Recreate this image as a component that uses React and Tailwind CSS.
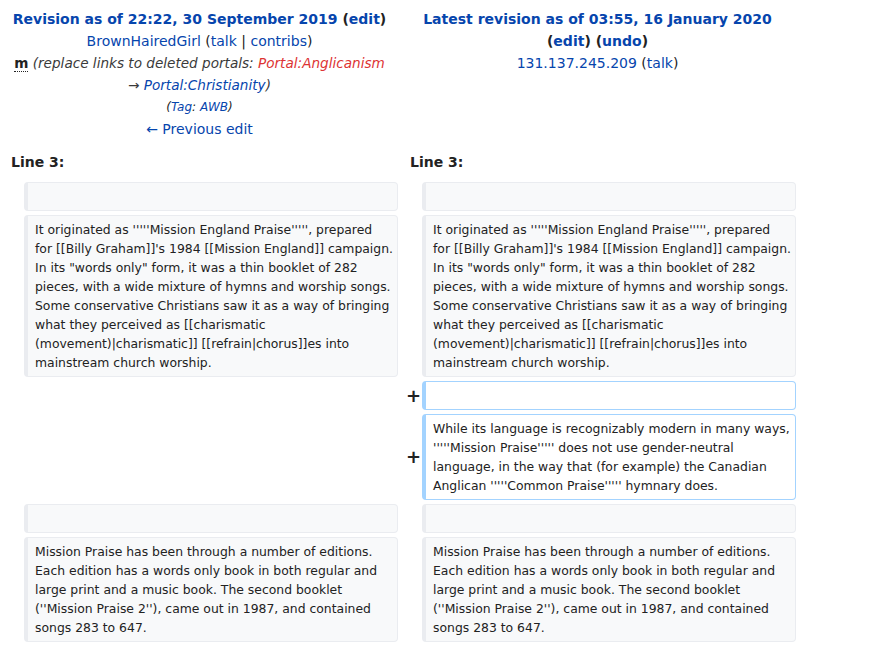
const para1 = `It originated as '''''Mission England Praise''''', prepared for [[Billy Graham]]'s 1984 [[Mission England]] campaign. In its "words only" form, it was a thin booklet of 282 pieces, with a wide mixture of hymns and worship songs. Some conservative Christians saw it as a way of bringing what they perceived as [[charismatic (movement)|charismatic]] [[refrain|chorus]]es into mainstream church worship.`

const added = `While its language is recognizably modern in many ways, '''''Mission Praise''''' does not use gender-neutral language, in the way that (for example) the Canadian Anglican '''''Common Praise''''' hymnary does.`

const para2 = `Mission Praise has been through a number of editions. Each edition has a words only book in both regular and large print and a music book. The second booklet (''Mission Praise 2''), came out in 1987, and contained songs 283 to 647.`

function Context({ text }) {
  return (
    <div className="bg-[#f8f9fa] border border-l-4 border-[#eaecf0] rounded-[4px] pl-[7px] pr-[4px] py-[4px] min-h-[29px] whitespace-pre-wrap text-[12.4px] leading-[19px] text-[#222]">
      {text}
    </div>
  )
}

function Added({ text }) {
  return (
    <div className="bg-white border border-l-4 border-[#a3d3ff] rounded-[4px] pl-[7px] pr-[4px] py-[4px] min-h-[29px] whitespace-pre-wrap text-[12.4px] leading-[19px] text-[#222]">
      {text}
    </div>
  )
}

function Plus() {
  return (
    <div className="flex items-center justify-end pr-[1px] text-[18px] font-bold text-[#222] leading-none">+</div>
  )
}

export default function App() {
  const link = 'text-[#0645ad]'
  return (
    <div className="min-h-screen bg-white font-['DejaVu_Sans',sans-serif] text-[#222]">
      {/* cabeceras */}
      <div className="grid grid-cols-[399px_397px] pt-[8px] text-[14px] leading-[22px] text-center">
        <div className="px-[8px]">
          <div className="font-bold whitespace-nowrap">
            <span className={link}>Revision as of 22:22, 30 September 2019</span> <span>(<span className={link}>edit</span>)</span>
          </div>
          <div>
            <span className={link}>BrownHairedGirl</span> (<span className={link}>talk</span> | <span className={link}>contribs</span>)
          </div>
          <div className="text-[13.6px]">
            <abbr className="font-bold no-underline border-b border-dotted border-[#222]">m</abbr>{' '}
            <span className="italic text-[#3a3a3a]">(replace links to deleted portals: <span className="text-[#d33]">Portal:Anglicanism</span> → <span className={link}>Portal:Christianity</span>)</span>
          </div>
          <div className="text-[12px] italic">
            (<span className={link}>Tag</span>: <span className={link}>AWB</span>)
          </div>
          <div className={link}>← Previous edit</div>
        </div>
        <div className="px-[8px]">
          <div className="font-bold whitespace-nowrap">
            <span className={link}>Latest revision as of 03:55, 16 January 2020</span>
          </div>
          <div className="font-bold">
            (<span className={link}>edit</span>) (<span className={link}>undo</span>)
          </div>
          <div>
            <span className={link}>131.137.245.209</span> (<span className={link}>talk</span>)
          </div>
        </div>
      </div>

      {/* diff */}
      <div className="grid grid-cols-[24px_374px_24px_374px] gap-y-[4px] mt-[11px]">
        <div className="col-span-2 pl-[11px] font-bold text-[14px] leading-[22px] mb-[5px]">Line 3:</div>
        <div className="col-span-2 pl-[12px] font-bold text-[14px] leading-[22px] mb-[5px]">Line 3:</div>

        <div />
        <Context text="" />
        <div />
        <Context text="" />

        <div />
        <Context text={para1} />
        <div />
        <Context text={para1} />

        <div />
        <div />
        <Plus />
        <Added text="" />

        <div />
        <div />
        <Plus />
        <Added text={added} />

        <div />
        <Context text="" />
        <div />
        <Context text="" />

        <div />
        <Context text={para2} />
        <div />
        <Context text={para2} />
      </div>
    </div>
  )
}
